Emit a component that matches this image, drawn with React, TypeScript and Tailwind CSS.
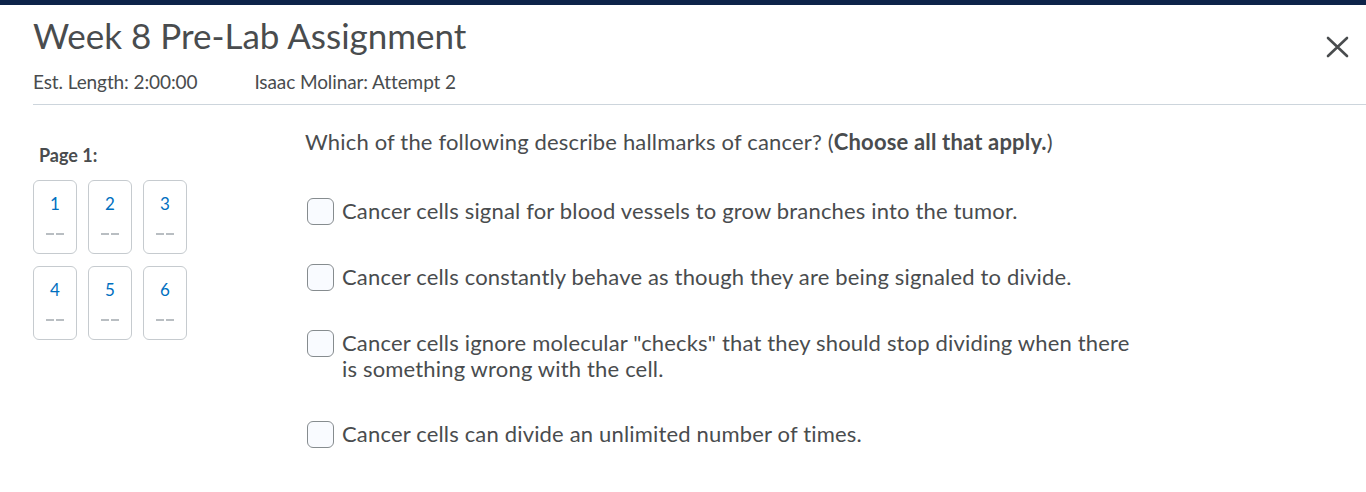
const options = [
  'Cancer cells signal for blood vessels to grow branches into the tumor.',
  'Cancer cells constantly behave as though they are being signaled to divide.',
  'Cancer cells ignore molecular "checks" that they should stop dividing when there is something wrong with the cell.',
  'Cancer cells can divide an unlimited number of times.',
];

function PageTile({ n }: { n: number }) {
  return (
    <button className="w-[44px] h-[74px] rounded-[6px] border border-[#c6cbcf] bg-white flex flex-col items-center pt-[13px]">
      <span className="text-[17px] leading-[20px] text-[#006fbf]">{n}</span>
      <span className="flex gap-[2px] mt-[19px]">
        <span className="w-[8px] h-[2px] bg-[#b9bec2]" />
        <span className="w-[8px] h-[2px] bg-[#b9bec2]" />
      </span>
    </button>
  );
}

export default function App() {
  return (
    <div className="relative w-full h-[492px] bg-white text-[#494c4e] font-['Lato','Open_Sans',sans-serif] overflow-hidden">
      <div className="h-[5px] bg-[#0d2349]" />

      {/* header */}
      <div className="ml-[33px] border-b border-[#cdd5dc] pb-[10px]">
        <h1 className="text-[35px] leading-[44px] mt-[8px]">Week 8 Pre-Lab Assignment</h1>
        <div className="flex text-[19px] leading-[24px] mt-[13px] tracking-[-0.1px]">
          <span>Est. Length: 2:00:00</span>
          <span className="ml-[57px]">Isaac Molinar: Attempt 2</span>
        </div>
      </div>
      <button className="absolute top-[36px] right-[17px] w-[23px] h-[22px] text-[#494c4e]" aria-label="Close">
        <svg viewBox="0 0 23 22" className="w-[23px] h-[22px]" fill="none" stroke="currentColor" strokeWidth="2.6" strokeLinecap="round">
          <path d="M2 2 L21 20 M21 2 L2 20" />
        </svg>
      </button>

      {/* body */}
      <div className="flex">
        <div className="ml-[33px] w-[272px] pt-[38px]">
          <div className="ml-[6px] text-[18px] leading-[24px] font-bold">Page 1:</div>
          <div className="grid grid-cols-[44px_44px_44px] gap-x-[11px] gap-y-[12px] mt-[13px]">
            {[1, 2, 3, 4, 5, 6].map((n) => (
              <PageTile key={n} n={n} />
            ))}
          </div>
        </div>

        <div className="pt-[24px] tracking-[0.17px]">
          <p className="text-[22px] leading-[26px]">
            Which of the following describe hallmarks of cancer? (<span className="font-bold">Choose all that apply.</span>)
          </p>
          <div className="flex flex-col gap-[39px] mt-[43px] ml-[2px]">
            {options.map((o) => (
              <label key={o} className="flex items-start gap-[8px]">
                <span className="w-[27px] h-[27px] shrink-0 rounded-[6px] border border-[#868c8f] bg-[#f9fbff]" />
                <span className="w-[793px] text-[22px] leading-[26px]">{o}</span>
              </label>
            ))}
          </div>
        </div>
      </div>
    </div>
  );
}
